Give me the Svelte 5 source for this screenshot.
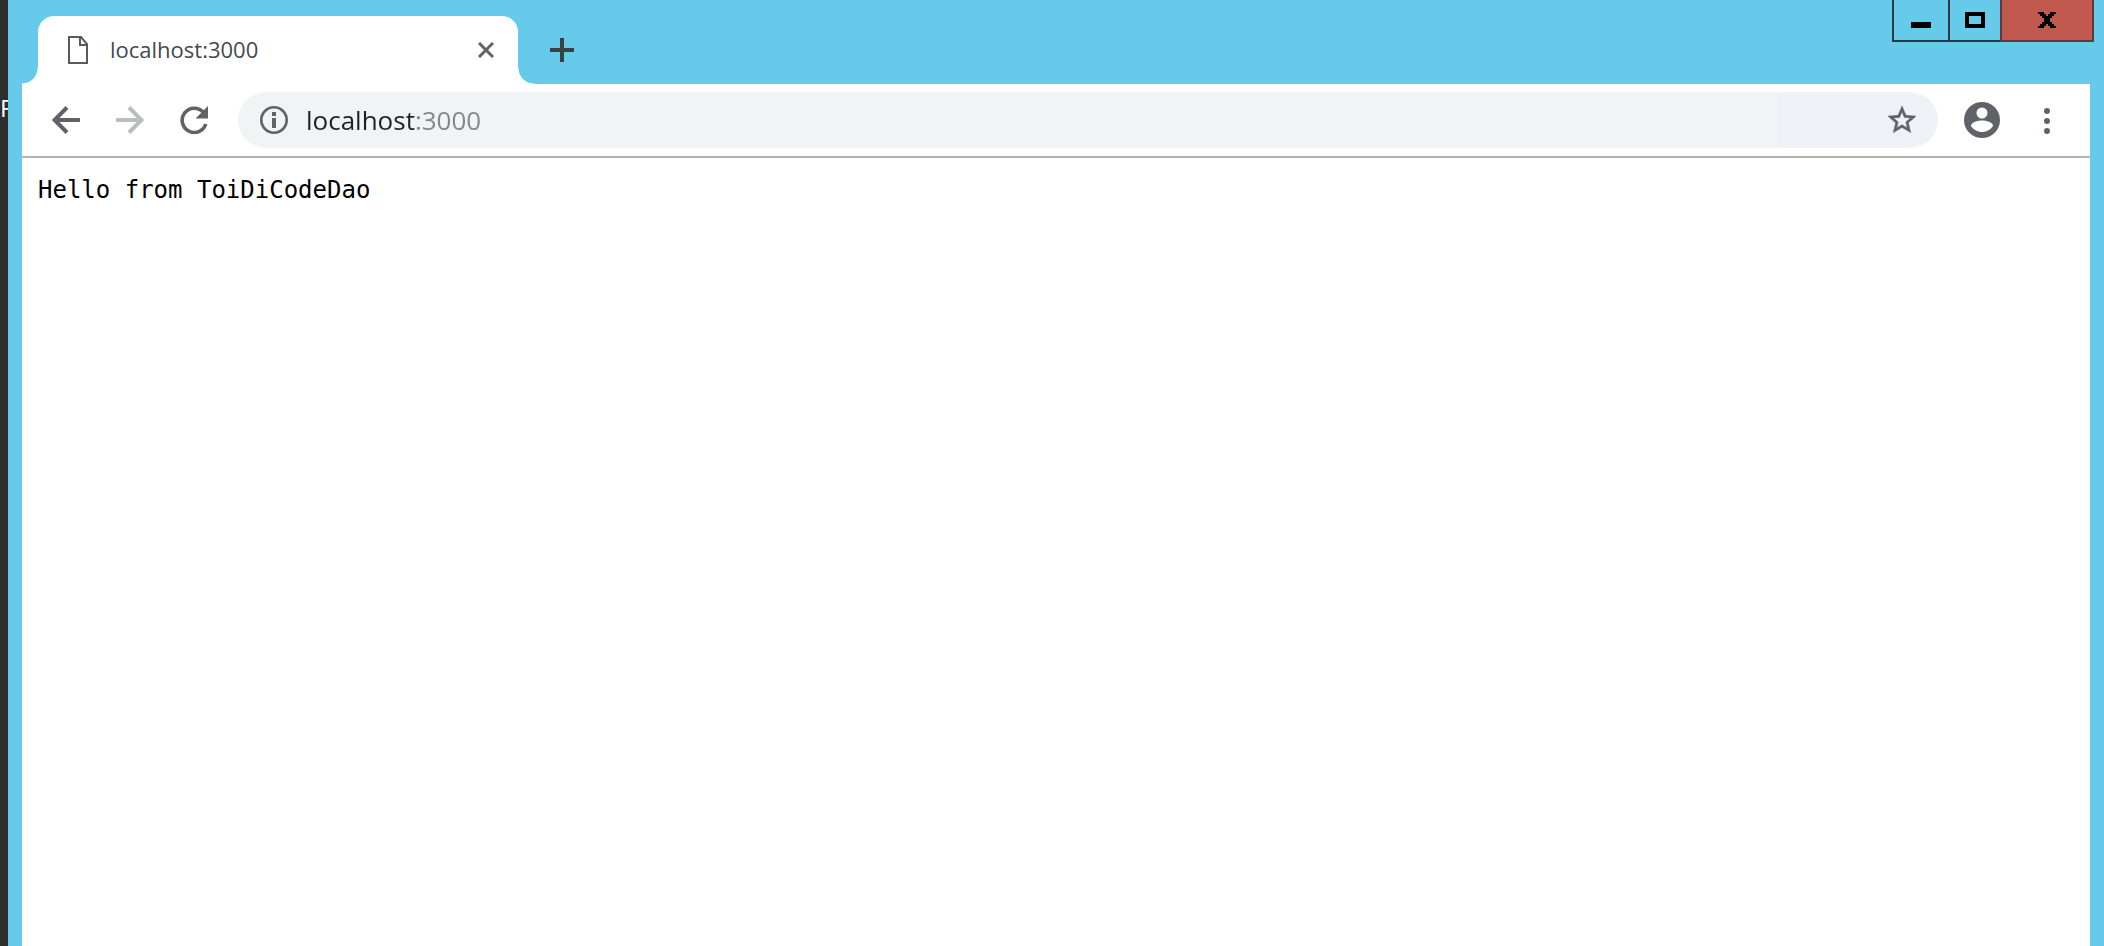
<script>
    let title = 'localhost:3000';
    let address = 'localhost:3000';
    let message = 'Hello from ToiDiCodeDao';
</script>

<div class="desktop">
    <aside class="behind">F</aside>
    <div class="window">
        <header class="titlebar">
            <div class="tab">
                <svg class="file" width="20" height="28" viewBox="0 0 20 28" aria-hidden="true">
                    <path d="M1 1h12l6 7v19H1z M12 1v8h7" fill="none" stroke="#5a5a5a" stroke-width="2" />
                </svg>
                <span class="tab-title">{title}</span>
                <button class="tab-close" aria-label="Close tab">
                    <svg width="16" height="16" viewBox="0 0 16 16">
                        <path d="M1 1l14 14M15 1L1 15" stroke="#5f6368" stroke-width="3" />
                    </svg>
                </button>
            </div>
            <button class="new-tab" aria-label="New tab">
                <svg width="24" height="24" viewBox="0 0 24 24">
                    <path d="M12 0v24M0 12h24" stroke="#3c4043" stroke-width="4" />
                </svg>
            </button>
            <div class="controls">
                <button class="minimize" aria-label="Minimize">
                    <svg width="20" height="16" viewBox="0 0 20 16"><path d="M0 10h20v6H0z" /></svg>
                </button>
                <button class="maximize" aria-label="Maximize">
                    <svg width="20" height="16" viewBox="0 0 20 16">
                        <path d="M0 0h20v16H0z M4 4v8h12V4z" fill-rule="evenodd" />
                    </svg>
                </button>
                <button class="close" aria-label="Close">
                    <svg width="18" height="16" viewBox="0 0 18 16" shape-rendering="crispEdges">
                        <path d="M0 0h6v2h2v2h2V2h2V0h6v2h-2v2h-2v2h-2v4h2v2h2v2h2v2h-6v-2h-2v-2H8v2H6v2H0v-2h2v-2h2v-2h2V6H4V4H2V2H0z" />
                    </svg>
                </button>
            </div>
        </header>

        <div class="content">
            <nav class="toolbar">
                <button aria-label="Back">
                    <svg width="28" height="28" viewBox="0 0 28 28">
                        <path d="M28 14H3M15 1.5L2.5 14 15 26.5" fill="none" stroke="#5f6368" stroke-width="4" />
                    </svg>
                </button>
                <button aria-label="Forward" disabled>
                    <svg width="28" height="28" viewBox="0 0 28 28">
                        <path d="M0 14h25M13 1.5L25.5 14 13 26.5" fill="none" stroke="#babcbe" stroke-width="4" />
                    </svg>
                </button>
                <button aria-label="Reload">
                    <svg width="28" height="28" viewBox="0 0 28 28">
                        <path d="M23.5 6.5A12.1 12.1 0 1 0 25.8 18" fill="none" stroke="#5f6368" stroke-width="3.6" />
                        <path d="M28 0v12.5H15.5z" fill="#5f6368" />
                    </svg>
                </button>
                <div class="omnibox">
                    <button aria-label="View site information">
                        <svg width="28" height="28" viewBox="0 0 28 28">
                            <circle cx="14" cy="14" r="12.7" fill="none" stroke="#5f6368" stroke-width="2.6" />
                            <path d="M12 6h4v4h-4z M12 12h4v10h-4z" fill="#5f6368" />
                        </svg>
                    </button>
                    <input type="text" bind:value={address} aria-label="Address" spellcheck="false" />
                    <button aria-label="Bookmark this page">
                        <svg width="28" height="28" viewBox="0 0 20 20">
                            <path
                                d="M20 7.24l-7.19-.62L10 0 7.19 6.63 0 7.24l5.46 4.73L3.82 19 10 15.27 16.18 19l-1.63-7.03zM10 13.4l-3.76 2.27 1-4.28-3.32-2.88 4.38-.38L10 4.1l1.71 4.04 4.38.38-3.32 2.88 1 4.28z"
                                fill="#5f6368"
                                stroke="#5f6368"
                                stroke-width="0.4"
                            />
                        </svg>
                    </button>
                </div>
                <button class="profile" aria-label="Profile">
                    <svg width="36" height="36" viewBox="0 0 36 36">
                        <circle cx="18" cy="18" r="18" fill="#5f6368" />
                        <circle cx="18" cy="11" r="5.5" fill="#fff" />
                        <path d="M7 24c0-4 7-5.5 11-5.5S29 20 29 24c-2.3 3.6-6.4 6-11 6s-8.7-2.4-11-6z" fill="#fff" />
                    </svg>
                </button>
                <button class="menu" aria-label="Menu">
                    <svg width="6" height="28" viewBox="0 0 6 28">
                        <g fill="#5f6368">
                            <circle cx="3" cy="5" r="3" />
                            <circle cx="3" cy="15" r="3" />
                            <circle cx="3" cy="25" r="3" />
                        </g>
                    </svg>
                </button>
            </nav>
            <main>
                <pre>{message}</pre>
            </main>
        </div>
    </div>
</div>

<style>
    :global(body) {
        margin: 0;
    }

    .desktop {
        display: flex;
        min-height: 100vh;
        background: #2d2d2d;
        font-family: "Open Sans", "Noto Sans", sans-serif;
    }

    .behind {
        box-sizing: border-box;
        width: 8px;
        padding-top: 92px;
        overflow: hidden;
        color: #fff;
        font-size: 24px;
        line-height: 32px;
    }

    .window {
        flex: 1;
        display: flex;
        flex-direction: column;
        min-width: 0;
        padding: 0 14px;
        background: #66caea;
    }

    button {
        display: flex;
        align-items: center;
        justify-content: center;
        flex: none;
        padding: 0;
        border: none;
        background: none;
        cursor: pointer;
    }

    svg {
        display: block;
        flex: none;
    }

    .titlebar {
        display: flex;
        align-items: flex-start;
        height: 84px;
    }

    .tab {
        position: relative;
        box-sizing: border-box;
        display: flex;
        align-items: center;
        width: 480px;
        height: 68px;
        margin: 16px 0 0 16px;
        padding: 0 24px 0 30px;
        border-radius: 16px 16px 0 0;
        background: #fff;
    }

    /* curved feet on both sides of the tab */
    .tab::before,
    .tab::after {
        content: "";
        position: absolute;
        bottom: 0;
        width: 16px;
        height: 16px;
    }

    .tab::before {
        right: 100%;
        background: radial-gradient(circle at 0 0, transparent 15px, #fff 16px);
    }

    .tab::after {
        left: 100%;
        background: radial-gradient(circle at 100% 0, transparent 15px, #fff 16px);
    }

    .tab-title {
        flex: 1;
        margin-left: 22px;
        padding-bottom: 2px;
        color: #45494d;
        font-size: 22px;
        line-height: 32px;
    }

    .new-tab {
        height: 24px;
        margin: 38px 0 0 32px;
    }

    .controls {
        display: flex;
        height: 42px;
        margin: 0 -4px 0 auto;
    }

    .controls button {
        box-sizing: border-box;
        padding-top: 12px;
        align-items: flex-start;
        border: solid #2b3a42;
        border-width: 0 0 2px 2px;
    }

    .controls .minimize {
        width: 56px;
    }

    .controls .maximize {
        width: 52px;
    }

    .controls .close {
        width: 94px;
        border-color: #5e3a3e;
        border-right-width: 2px;
        background: #c1594f;
    }

    .content {
        flex: 1;
        background: #fff;
    }

    .toolbar {
        display: flex;
        align-items: center;
        gap: 36px;
        height: 72px;
        padding: 0 40px 0 30px;
        border-bottom: 2px solid #b3b4b6;
    }

    .omnibox {
        flex: 1;
        box-sizing: border-box;
        display: flex;
        align-items: center;
        height: 56px;
        margin: 0 -10px 0 -6px;
        padding: 0 22px;
        border-radius: 28px;
        background: linear-gradient(to left, #eef1f6 160px, #f1f3f4 160px);
    }

    input {
        flex: 1;
        min-width: 0;
        margin: 0 16px;
        padding: 0 2px;
        border: none;
        outline: none;
        /* host is dark, port is grey */
        background: linear-gradient(to right, #202124 112px, #80868b 112px);
        -webkit-background-clip: text;
        background-clip: text;
        color: transparent;
        caret-color: #202124;
        font-family: inherit;
        font-size: 26px;
        line-height: 36px;
    }

    .menu {
        margin-left: 8px;
    }

    pre {
        margin: 0;
        padding: 16px;
        color: #000;
        font-family: "DejaVu Sans Mono", monospace;
        font-size: 24px;
        line-height: 32px;
    }
</style>
